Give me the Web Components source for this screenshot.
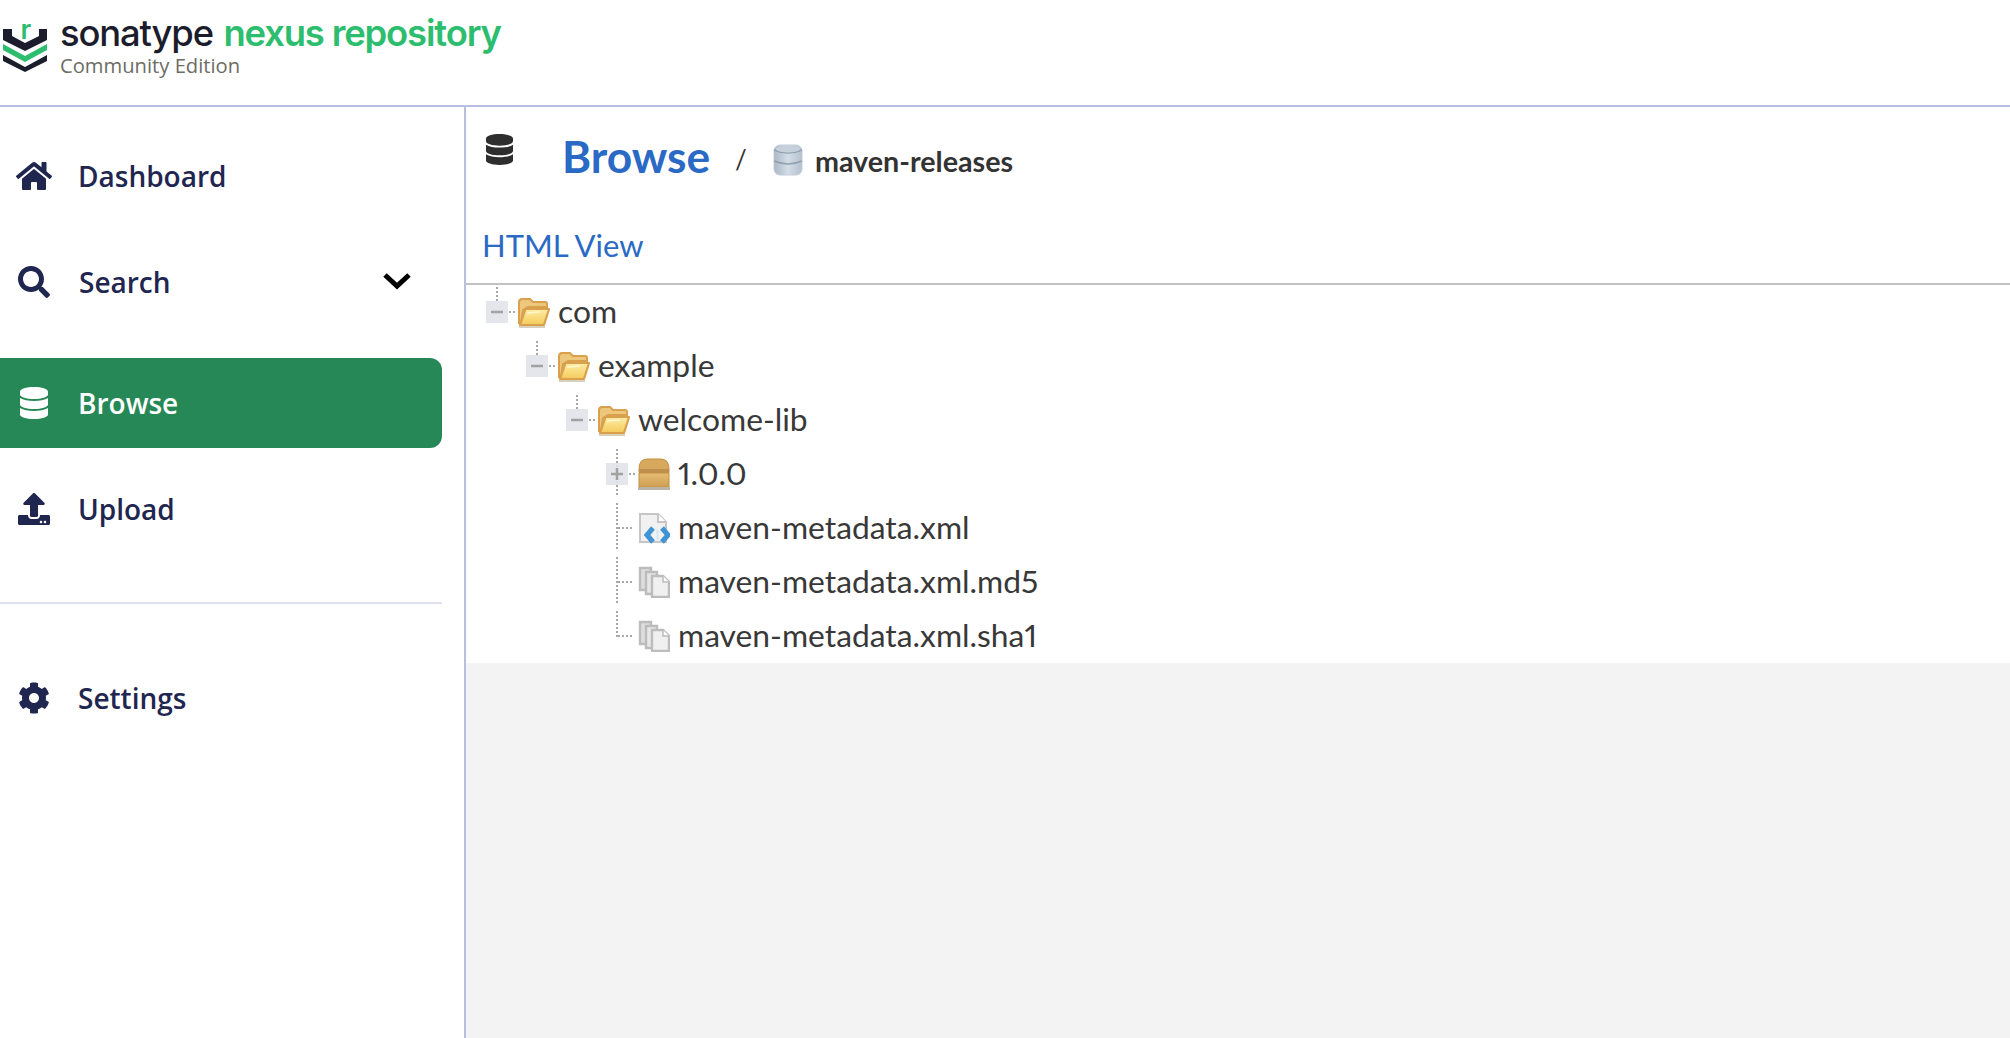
<!DOCTYPE html>
<html lang="en">
<head>
<meta charset="utf-8">
<title>Browse - Sonatype Nexus Repository</title>
<style>
  html, body { margin: 0; height: 100%; background: #fff; }
</style>
</head>
<body>
<nx-app>
  <nx-header slot="header"></nx-header>
  <nx-sidebar slot="sidebar">
    <nx-nav-item icon="home">Dashboard</nx-nav-item>
    <nx-nav-item icon="search" expandable>Search</nx-nav-item>
    <nx-nav-item icon="database" active>Browse</nx-nav-item>
    <nx-nav-item icon="upload">Upload</nx-nav-item>
    <nx-nav-divider></nx-nav-divider>
    <nx-nav-item icon="cog">Settings</nx-nav-item>
  </nx-sidebar>
  <nx-browse-head repo="maven-releases"></nx-browse-head>
  <nx-tree>
    <nx-tree-row level="0" toggle="open" icon="folder">com</nx-tree-row>
    <nx-tree-row level="1" toggle="open" icon="folder">example</nx-tree-row>
    <nx-tree-row level="2" toggle="open" icon="folder">welcome-lib</nx-tree-row>
    <nx-tree-row level="3" toggle="closed" icon="box">1.0.0</nx-tree-row>
    <nx-tree-row level="3" toggle="leaf" icon="xml">maven-metadata.xml</nx-tree-row>
    <nx-tree-row level="3" toggle="leaf" icon="pages">maven-metadata.xml.md5</nx-tree-row>
    <nx-tree-row level="3" toggle="last" icon="pages">maven-metadata.xml.sha1</nx-tree-row>
  </nx-tree>
</nx-app>

<script>
// Font Awesome style solid glyphs used by the nav
const NAV_ICONS = {
  home: { box: '0 0 576 512', w: 36, h: 32, d: 'M280.37 148.26L96 300.11V464a16 16 0 0 0 16 16l112.06-.29a16 16 0 0 0 15.92-16V368a16 16 0 0 1 16-16h64a16 16 0 0 1 16 16v95.64a16 16 0 0 0 16 16.05L464 480a16 16 0 0 0 16-16V300L295.67 148.26a12.19 12.19 0 0 0-15.3 0zM571.6 251.47L488 182.56V44.05a12 12 0 0 0-12-12h-56a12 12 0 0 0-12 12v72.61L318.47 43a48 48 0 0 0-61 0L4.34 251.47a12 12 0 0 0-1.6 16.9l25.5 31A12 12 0 0 0 45.15 301l235.22-193.74a12.19 12.19 0 0 1 15.3 0L530.9 301a12 12 0 0 0 16.9-1.6l25.5-31a12 12 0 0 0-1.7-16.93z' },
  search: { box: '0 0 512 512', w: 32, h: 32, d: 'M505 442.7L405.3 343c-4.5-4.5-10.6-7-17-7H372c27.6-35.3 44-79.7 44-128C416 93.1 322.9 0 208 0S0 93.1 0 208s93.1 208 208 208c48.3 0 92.7-16.4 128-44v16.3c0 6.4 2.5 12.5 7 17l99.7 99.7c9.4 9.4 24.6 9.4 33.9 0l28.3-28.3c9.4-9.4 9.4-24.6.1-34zM208 336c-70.7 0-128-57.2-128-128 0-70.7 57.2-128 128-128 70.7 0 128 57.2 128 128 0 70.7-57.2 128-128 128z' },
  database: { box: '0 0 448 512', w: 28, h: 32, d: 'M448 73.143v45.714C448 159.143 347.667 192 224 192S0 159.143 0 118.857V73.143C0 32.857 100.333 0 224 0s224 32.857 224 73.143zM448 176v102.857C448 319.143 347.667 352 224 352S0 319.143 0 278.857V176c48.125 33.143 136.208 48.572 224 48.572S399.874 209.143 448 176zm0 160v102.857C448 479.143 347.667 512 224 512S0 479.143 0 438.857V336c48.125 33.143 136.208 48.572 224 48.572S399.874 369.143 448 336z' },
  upload: { box: '0 0 512 512', w: 32, h: 32, d: 'M296 384h-80c-13.3 0-24-10.7-24-24V192h-87.7c-17.8 0-26.7-21.5-14.1-34.1L242.3 5.7c7.5-7.5 19.8-7.5 27.3 0l152.2 152.2c12.6 12.6 3.7 34.1-14.1 34.1H320v168c0 13.3-10.7 24-24 24zm216-8v112c0 13.3-10.7 24-24 24H24c-13.3 0-24-10.7-24-24V376c0-13.3 10.7-24 24-24h136v8c0 30.9 25.1 56 56 56h80c30.9 0 56-25.1 56-56v-8h136c13.3 0 24 10.7 24 24zm-124 88c0-11-9-20-20-20s-20 9-20 20 9 20 20 20 20-9 20-20zm64 0c0-11-9-20-20-20s-20 9-20 20 9 20 20 20 20-9 20-20z' },
  cog: { box: '0 0 512 512', w: 32, h: 32, d: 'M487.4 315.7l-42.6-24.6c4.3-23.2 4.3-47 0-70.2l42.6-24.6c4.9-2.8 7.1-8.6 5.5-14-11.1-35.6-30-67.8-54.7-94.6-3.8-4.1-10-5.1-14.8-2.3L380.8 110c-17.9-15.4-38.5-27.3-60.8-35.1V25.8c0-5.6-3.9-10.5-9.4-11.7-36.7-8.2-74.3-7.8-109.2 0-5.5 1.2-9.4 6.1-9.4 11.7V75c-22.2 7.9-42.8 19.8-60.8 35.1L88.7 85.5c-4.9-2.8-11-1.9-14.8 2.3-24.7 26.7-43.6 58.9-54.7 94.6-1.7 5.4.6 11.2 5.5 14L67.3 221c-4.3 23.2-4.3 47 0 70.2l-42.6 24.6c-4.9 2.8-7.1 8.6-5.5 14 11.1 35.6 30 67.8 54.7 94.6 3.8 4.1 10 5.1 14.8 2.3l42.6-24.6c17.9 15.4 38.5 27.3 60.8 35.1v49.2c0 5.6 3.9 10.5 9.4 11.7 36.7 8.2 74.3 7.8 109.2 0 5.5-1.2 9.4-6.1 9.4-11.7v-49.2c22.2-7.9 42.8-19.8 60.8-35.1l42.6 24.6c4.9 2.8 11 1.9 14.8-2.3 24.7-26.7 43.6-58.9 54.7-94.6 1.5-5.5-.7-11.3-5.6-14.1zM256 336c-44.1 0-80-35.9-80-80s35.9-80 80-80 80 35.9 80 80-35.9 80-80 80z' }
};

// ExtJS-era tree icons, drawn on a 32x32 box
const TREE_ICONS = {
  folder: `
    <defs><linearGradient id="f" x1="0" y1="0" x2="0" y2="1"><stop offset="0" stop-color="#fdeea6"/><stop offset="1" stop-color="#f5c95a"/></linearGradient></defs>
    <path d="M1 6.5 Q1 3 4 3 H12 L15 6 H27 Q29 6 29 8 V11 H10 L5 14 L3 27 H1 Z" fill="#ecc77c" stroke="#d9a04e" stroke-width="2"/>
    <path d="M2 29 L7.5 13 H31 L26 29 Z" fill="url(#f)" stroke="#d9a04e" stroke-width="2.2" stroke-linejoin="round"/>
    <path d="M9 17 L22 16" stroke="#fff6cf" stroke-width="1.5"/>
    <rect x="1" y="30" width="26" height="2" fill="#d8d0bc"/>`,
  box: `
    <defs><linearGradient id="b" x1="0" y1="0" x2="0" y2="1"><stop offset="0" stop-color="#e3bd74"/><stop offset="1" stop-color="#d0a052"/></linearGradient></defs>
    <path d="M1 11 Q1 1 9 1 H23 Q31 1 31 11 V14 H1 Z" fill="#d7a95e" stroke="#c48f45"/>
    <rect x="1" y="11" width="30" height="4" fill="#bf8f4c"/>
    <rect x="1" y="15" width="30" height="14" fill="url(#b)" stroke="#c48f45"/>
    <rect x="0" y="29" width="32" height="3" fill="#b9b4a8"/>`,
  xml: `
    <path d="M2 2 H20 L28 10 V30 H2 Z" fill="#f1f1f1" stroke="#c6c6c6" stroke-width="2"/>
    <path d="M20 2 V10 H28" fill="#fff" stroke="#c6c6c6" stroke-width="2"/>
    <path d="M15 16 L9 23 L15 30" fill="none" stroke="#3f94d6" stroke-width="5"/>
    <path d="M24 16 L30 23 L24 30" fill="none" stroke="#3f94d6" stroke-width="5"/>
    <path d="M19.5 18 V28" stroke="#d4e6f4" stroke-width="2"/>`,
  pages: `
    <path d="M2 2 H13 V24 H2 Z" fill="#dedede" stroke="#bcbcbc" stroke-width="2.4"/>
    <path d="M8 6 H19 V28 H8 Z" fill="#e6e6e6" stroke="#bcbcbc" stroke-width="2.4"/>
    <path d="M14 10 H25 L31 16 V31 H14 Z" fill="#f0f0f0" stroke="#bcbcbc" stroke-width="2.4"/>
    <path d="M25 10 V16 H31" fill="#fff" stroke="#bcbcbc" stroke-width="1.5"/>`
};

const define = (name, cls) => {
  if (!customElements.get(name)) customElements.define(name, cls);
};

class NxApp extends HTMLElement {
  constructor() {
    super();
    this.attachShadow({ mode: 'open' }).innerHTML = `
      <style>
        :host { display: grid; height: 1038px; grid-template-columns: 466px 1fr; grid-template-rows: 107px 1fr; }
        .top { grid-column: 1 / 3; border-bottom: 2px solid #b8c0e0; }
        .side { border-right: 2px solid #b8c0e0; min-height: 0; }
        .main { display: flex; flex-direction: column; background: #f3f3f3; min-width: 0; }
      </style>
      <div class="top"><slot name="header"></slot></div>
      <div class="side"><slot name="sidebar"></slot></div>
      <div class="main"><slot></slot></div>`;
  }
}

class NxHeader extends HTMLElement {
  constructor() {
    super();
    this.attachShadow({ mode: 'open' }).innerHTML = `
      <style>
        :host { display: flex; height: 105px; box-sizing: border-box; padding: 11px 0 0 3px; gap: 13px; }
        svg { margin-top: 3px; flex: none; }
        .brand { font: 500 36.4px/44px Inter, sans-serif; letter-spacing: -1.15px; color: #1b1d2c; white-space: nowrap; }
        .brand b { font-weight: 600; color: #2dbd6e; margin-left: 2px; }
        .edition { font: 400 20.2px/22px "Open Sans", sans-serif; color: #6c6c64; margin-top: -1px; }
      </style>
      <svg width="44" height="60" viewBox="3 14 44 60" aria-hidden="true">
        <path d="M3 29 V40 L25 51 L47 40 V29 H39 V36 L25 43 L12 36 V29 Z" fill="#1b1d2c"/>
        <path d="M3 44 L25 56 L47 44 V50 L25 62 L3 50 Z" fill="#2dbd6e"/>
        <path d="M3 55 L25 67 L47 55 V61 L25 72 L3 61 Z" fill="#1b1d2c"/>
        <text x="20.5" y="39" font-family="Inter, sans-serif" font-weight="600" font-size="27" fill="#2dbd6e">r</text>
      </svg>
      <div>
        <div class="brand">sonatype <b>nexus repository</b></div>
        <div class="edition">Community Edition</div>
      </div>`;
  }
}

class NxSidebar extends HTMLElement {
  constructor() {
    super();
    this.attachShadow({ mode: 'open' }).innerHTML = `
      <style>
        :host { display: flex; flex-direction: column; padding: 24px 0 0; width: 442px; }
        ::slotted(nx-nav-item) { margin-bottom: 16px; }
        ::slotted(nx-nav-item[expandable]) { margin-bottom: 31px; }
      </style>
      <slot></slot>`;
  }
}

class NxNavItem extends HTMLElement {
  connectedCallback() {
    const icon = NAV_ICONS[this.getAttribute('icon')];
    const chevron = this.hasAttribute('expandable') ? `
      <svg class="chev" width="30" height="20" viewBox="0 0 30 20" aria-hidden="true">
        <path d="M3 4 L15 15 L27 4" fill="none" stroke="#000" stroke-width="5"/>
      </svg>` : '';
    this.shadowRoot || this.attachShadow({ mode: 'open' });
    this.shadowRoot.innerHTML = `
      <style>
        :host { display: flex; align-items: center; height: 90px; padding-left: 14px; box-sizing: border-box;
          color: #1f2650; font: 600 28px "Open Sans", sans-serif; border-radius: 0 12px 12px 0; }
        :host([active]) { background: #268856; color: #fff; }
        .ico { width: 40px; flex: none; display: flex; justify-content: center; margin-right: 24px; }
        :host([expandable]) .ico { margin-right: 25px; }
        .ico svg { fill: currentColor; display: block; }
        .chev { margin-left: auto; margin-right: 30px; margin-top: -3px; }
      </style>
      <span class="ico"><svg width="${icon.w}" height="${icon.h}" viewBox="${icon.box}" aria-hidden="true"><path d="${icon.d}"/></svg></span>
      <slot></slot>${chevron}`;
  }
}

class NxNavDivider extends HTMLElement {
  constructor() {
    super();
    this.attachShadow({ mode: 'open' }).innerHTML = `
      <style>:host { display: block; height: 2px; background: #dde0f0; margin: 32px 0 49px; }</style>`;
  }
}

class NxBrowseHead extends HTMLElement {
  connectedCallback() {
    const db = NAV_ICONS.database;
    this.shadowRoot || this.attachShadow({ mode: 'open' });
    this.shadowRoot.innerHTML = `
      <style>
        :host { display: block; background: #fff; height: 178px; box-sizing: border-box; border-bottom: 2px solid #c2c2c2; padding: 24px 0 0 16px; font-family: Lato, sans-serif; color: #333; }
        .crumbs { display: flex; align-items: center; height: 50px; }
        .db { fill: #2e2e2e; flex: none; align-self: flex-start; margin: 3px 49px 0 4px; }
        h1 { font: 700 44.3px Lato, sans-serif; color: #2a6ac4; margin: -2px 0 0; }
        .sep { font-size: 26px; margin: 5px 26px 0 25px; }
        .repo { flex: none; margin: 8px 12px 0 0; }
        .name { font-weight: 700; font-size: 28.7px; margin-top: 10px; }
        .view { font-size: 31px; line-height: 40px; color: #2a6ac4; margin-top: 44px; }
      </style>
      <div class="crumbs">
        <svg class="db" width="27" height="31" viewBox="${db.box}" aria-hidden="true"><path d="${db.d}"/></svg>
        <h1>Browse</h1>
        <span class="sep">/</span>
        <svg class="repo" width="30" height="34" viewBox="0 0 30 34" aria-hidden="true">
          <defs><linearGradient id="r" x1="0" y1="0" x2="1" y2="0"><stop offset="0" stop-color="#a9b7c6"/><stop offset=".5" stop-color="#d3dde7"/><stop offset="1" stop-color="#b3c0ce"/></linearGradient></defs>
          <rect x="1" y="2" width="28" height="30" rx="6" fill="url(#r)" stroke="#c3ccd4"/>
          <path d="M1 7 Q15 13 29 7 M1 18 Q15 24 29 18" fill="none" stroke="#8fa0b0" stroke-width="1.5"/>
          <ellipse cx="15" cy="6" rx="12" ry="3.5" fill="#c5d0db"/>
        </svg>
        <span class="name">${this.getAttribute('repo')}</span>
      </div>
      <div class="view">HTML View</div>`;
  }
}

class NxTree extends HTMLElement {
  constructor() {
    super();
    this.attachShadow({ mode: 'open' }).innerHTML = `
      <style>:host { display: block; background: #fff; font: 400 31.8px Lato, sans-serif; color: #383838; font-variant-numeric: proportional-nums; }</style>
      <slot></slot>`;
  }
}

// Draws the dotted connector and +/- box for one row, on a 32x54 cell
function connector(kind) {
  const dots = 'stroke="#a8a8a8" stroke-width="2" stroke-dasharray="2 2" fill="none"';
  if (kind === 'leaf' || kind === 'last') {
    const bottom = kind === 'last' ? 28 : 49;
    return `<path d="M11 2 V${bottom}" ${dots}/><path d="M12 27 H28" ${dots}/>`;
  }
  const vEnd = kind === 'closed' ? 48 : 16;
  const mark = kind === 'closed' ? 'M5 27 H17 M11 21 V33' : 'M5 27 H17';
  return `<path d="M11 2 V${vEnd}" ${dots}/>
    <rect x="0" y="16" width="22" height="22" fill="#e2e4e9" fill-opacity=".92"/>
    <path d="${mark}" stroke="#a2a2a2" stroke-width="2.5" fill="none"/>
    <path d="M23 27 H30" ${dots}/>`;
}

class NxTreeRow extends HTMLElement {
  connectedCallback() {
    const level = Number(this.getAttribute('level')) || 0;
    const kind = this.getAttribute('toggle');
    this.shadowRoot || this.attachShadow({ mode: 'open' });
    this.shadowRoot.innerHTML = `
      <style>
        :host { display: flex; align-items: center; height: 54px; padding-left: ${20 + level * 40}px; white-space: nowrap; }
        svg { flex: none; display: block; }
        .icon { margin: 0 8px 0 0; }
        .label { margin-top: -2px; }
      </style>
      <svg width="32" height="54" viewBox="0 0 32 54" aria-hidden="true">${connector(kind)}</svg>
      <svg class="icon" width="32" height="32" viewBox="0 0 32 32" aria-hidden="true">${TREE_ICONS[this.getAttribute('icon')]}</svg>
      <span class="label"><slot></slot></span>`;
  }
}

define('nx-app', NxApp);
define('nx-header', NxHeader);
define('nx-sidebar', NxSidebar);
define('nx-nav-item', NxNavItem);
define('nx-nav-divider', NxNavDivider);
define('nx-browse-head', NxBrowseHead);
define('nx-tree', NxTree);
define('nx-tree-row', NxTreeRow);
</script>
</body>
</html>
